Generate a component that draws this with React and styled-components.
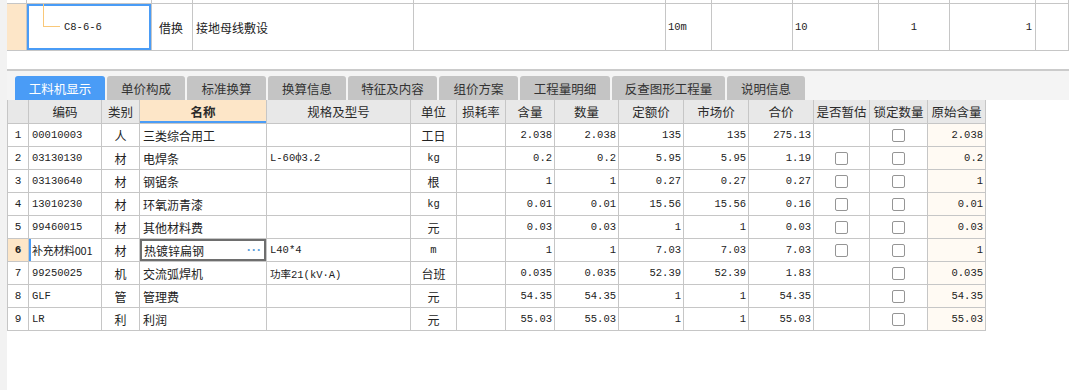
import React from "react";
import styled, { createGlobalStyle } from "styled-components";

const GlobalStyle = createGlobalStyle`
  html, body { margin: 0; padding: 0; background: #fff; }
`;

const LINE = "#c6c6c6";
const BLUE = "#4a9cf6";
const PEACH = "#fde6c8";
const MONO = `"Liberation Mono", "Noto Sans CJK SC", monospace`;
const CJK = `"Noto Sans CJK SC", "Liberation Sans", sans-serif`;

const Page = styled.div`
  display: flex;
  height: 390px;
  overflow: hidden;
  font-family: ${CJK};
  font-size: 12px;
  color: #222;
`;

const SideStrip = styled.div`
  width: 7px;
  flex: none;
  background: #f2f2f2;
`;

const Main = styled.div`
  flex: 1;
  min-width: 0;
  display: flex;
  flex-direction: column;
`;

const Row = styled.div`
  display: grid;
  grid-template-columns: ${({ $cols }) => $cols};
  height: ${({ $h }) => $h}px;
  box-sizing: border-box;
  border-bottom: 1px solid ${LINE};
  background: ${({ $bg }) => $bg || "transparent"};
`;

const justify = { left: "flex-start", center: "center", right: "flex-end" };

const Cell = styled.div`
  box-sizing: border-box;
  border-right: 1px solid ${LINE};
  display: flex;
  align-items: center;
  justify-content: ${({ $align = "left" }) => justify[$align]};
  padding: 0 ${({ $pad = 3 }) => $pad}px;
  overflow: hidden;
  white-space: nowrap;
  background: ${({ $bg }) => $bg || "transparent"};
  font-family: ${({ $mono }) => ($mono ? MONO : CJK)};
  font-size: ${({ $mono, $size }) => ($size ? `${$size}px` : $mono ? "10.5px" : "12px")};
  letter-spacing: ${({ $tight }) => ($tight ? "-0.3px" : "0")};
  font-weight: ${({ $bold }) => ($bold ? 700 : 400)};
  box-shadow: ${({ $frame }) => $frame || "none"};
`;

/* ---------- upper grid (quota row) ---------- */

const TOP_COLS =
  "20px 125px 41px 221px 252px 46px 81px 86px 71px 86px 1fr";

const Connector = styled.span`
  align-self: flex-start;
  flex: none;
  width: 17px;
  height: 23px;
  margin-left: 16px;
  margin-right: 4px;
  box-sizing: border-box;
  border-left: 1px solid #f9c879;
  border-bottom: 1px solid #f9c879;
`;

const QuotaCode = styled.span`
  font-family: ${MONO};
  font-size: 10.5px;
`;

const Spacer = styled.div`
  height: 18px;
`;

/* ---------- tabs ---------- */

const TabBar = styled.div`
  display: flex;
  gap: 2px;
  align-items: flex-end;
  height: 29px;
  padding-left: 8px;
  border-top: 2px solid #cbcbcb;
  background: #f4f4f4;
`;

const Tab = styled.div`
  width: ${({ $w }) => $w}px;
  height: 24px;
  display: flex;
  align-items: center;
  justify-content: center;
  border-radius: 3px 3px 0 0;
  background: ${({ $active }) => ($active ? BLUE : "#c4c4c4")};
  color: ${({ $active }) => ($active ? "#fff" : "#333")};
  font-size: 12.5px;
`;

/* ---------- material grid ---------- */

const GRID_COLS =
  "21px 73px 38px 127px 144px 46px 49px 49px 64px 65px 65px 65px 56px 58px 58px";

const Grid = styled.div`
  width: 979px;
  box-sizing: border-box;
  border-left: 1px solid ${LINE};
`;

const HeadCell = styled(Cell)`
  justify-content: center;
  color: #2a2a2a;
  font-size: 12.5px;
  background: ${({ $hl }) => ($hl ? PEACH : "#e8e8e8")};
  box-shadow: ${({ $hl }) => ($hl ? `inset 0 -2px 0 ${BLUE}` : "none")};
`;

const Check = styled.span`
  width: 13px;
  height: 13px;
  box-sizing: border-box;
  border: 1px solid #959595;
  border-radius: 2px;
  background: #fff;
`;

const Dots = styled.span`
  color: #5a9bd8;
  font-family: "Liberation Sans", sans-serif;
  font-weight: 700;
  font-size: 12px;
  letter-spacing: 1px;
`;

const tabs = [
  ["工料机显示", 90, true],
  ["单价构成", 78],
  ["标准换算", 79],
  ["换算信息", 78],
  ["特征及内容", 89],
  ["组价方案", 79],
  ["工程量明细", 90],
  ["反查图形工程量", 113],
  ["说明信息", 78],
];

const headers = [
  "", "编码", "类别", "名称", "规格及型号", "单位", "损耗率", "含量", "数量",
  "定额价", "市场价", "合价", "是否暂估", "锁定数量", "原始含量",
];

const rows = [
  ["00010003", "人", "三类综合用工", "", "工日", "2.038", "2.038", "135", "135", "275.13", false, "2.038"],
  ["03130130", "材", "电焊条", "L-60ф3.2", "kg", "0.2", "0.2", "5.95", "5.95", "1.19", true, "0.2"],
  ["03130640", "材", "钢锯条", "", "根", "1", "1", "0.27", "0.27", "0.27", true, "1"],
  ["13010230", "材", "环氧沥青漆", "", "kg", "0.01", "0.01", "15.56", "15.56", "0.16", true, "0.01"],
  ["99460015", "材", "其他材料费", "", "元", "0.03", "0.03", "1", "1", "0.03", true, "0.03"],
  ["补充材料001", "材", "热镀锌扁钢", "L40*4", "m", "1", "1", "7.03", "7.03", "7.03", true, "1"],
  ["99250025", "机", "交流弧焊机", "功率21(kV·A)", "台班", "0.035", "0.035", "52.39", "52.39", "1.83", false, "0.035"],
  ["GLF", "管", "管理费", "", "元", "54.35", "54.35", "1", "1", "54.35", false, "54.35"],
  ["LR", "利", "利润", "", "元", "55.03", "55.03", "1", "1", "55.03", false, "55.03"],
];

const SELECTED = 5;
const hasHan = (s) => /[\u4e00-\u9fa5]/.test(s);

const DataRow = ({ row, index }) => {
  const [code, cat, name, spec, unit, qty, amount, quota, market, total, est, orig] = row;
  const selected = index === SELECTED;
  return (
    <Row $cols={GRID_COLS} $h={23}>
      <Cell $align="center" $mono $size={11} $bold={selected} $bg={selected ? PEACH : null}>
        {index + 1}
      </Cell>
      <Cell
        $mono={!hasHan(code)}
        $size={hasHan(code) ? 11 : null}
        $tight={hasHan(code)}
        $frame={selected ? `inset 2px 0 0 ${BLUE}` : null}
      >
        {code}
      </Cell>
      <Cell $align="center">{cat}</Cell>
      {selected ? (
        <Cell $frame="inset 0 0 0 2px #6e6e6e" $pad={4} style={{ justifyContent: "space-between" }}>
          {name}
          <Dots>···</Dots>
        </Cell>
      ) : (
        <Cell>{name}</Cell>
      )}
      <Cell $mono>{spec}</Cell>
      <Cell $mono={!hasHan(unit)} $align="center">{unit}</Cell>
      <Cell />
      <Cell $mono $align="right" $pad={2}>{qty}</Cell>
      <Cell $mono $align="right" $pad={2}>{amount}</Cell>
      <Cell $mono $align="right" $pad={2}>{quota}</Cell>
      <Cell $mono $align="right" $pad={2}>{market}</Cell>
      <Cell $mono $align="right" $pad={2}>{total}</Cell>
      <Cell $align="center">{est && <Check />}</Cell>
      <Cell $align="center"><Check /></Cell>
      <Cell $mono $align="right" $pad={2} $bg="#fffaf3">{orig}</Cell>
    </Row>
  );
};

const App = () => (
  <>
    <GlobalStyle />
    <Page>
      <SideStrip />
      <Main>
        <Row $cols={TOP_COLS} $h={4}>
          {Array.from({ length: 11 }).map((_, i) => (
            <Cell key={i} />
          ))}
        </Row>
        <Row $cols={TOP_COLS} $h={47}>
          <Cell $bg={PEACH} />
          <Cell $pad={0} $frame={`inset 0 0 0 2px ${BLUE}`}>
            <Connector />
            <QuotaCode>C8-6-6</QuotaCode>
          </Cell>
          <Cell $pad={7}>借换</Cell>
          <Cell>接地母线敷设</Cell>
          <Cell />
          <Cell $mono $pad={2}>10m</Cell>
          <Cell />
          <Cell $mono $pad={2}>10</Cell>
          <Cell $mono $align="center">1</Cell>
          <Cell $mono $align="right">1</Cell>
          <Cell />
        </Row>
        <Spacer />
        <TabBar>
          {tabs.map(([label, w, active]) => (
            <Tab key={label} $w={w} $active={active}>
              {label}
            </Tab>
          ))}
        </TabBar>
        <Grid>
          <Row $cols={GRID_COLS} $h={24}>
            {headers.map((h, i) => (
              <HeadCell key={i} $hl={h === "名称"} $bold={h === "名称"}>
                {h}
              </HeadCell>
            ))}
          </Row>
          {rows.map((row, i) => (
            <DataRow key={i} row={row} index={i} />
          ))}
        </Grid>
      </Main>
    </Page>
  </>
);

export default App;
